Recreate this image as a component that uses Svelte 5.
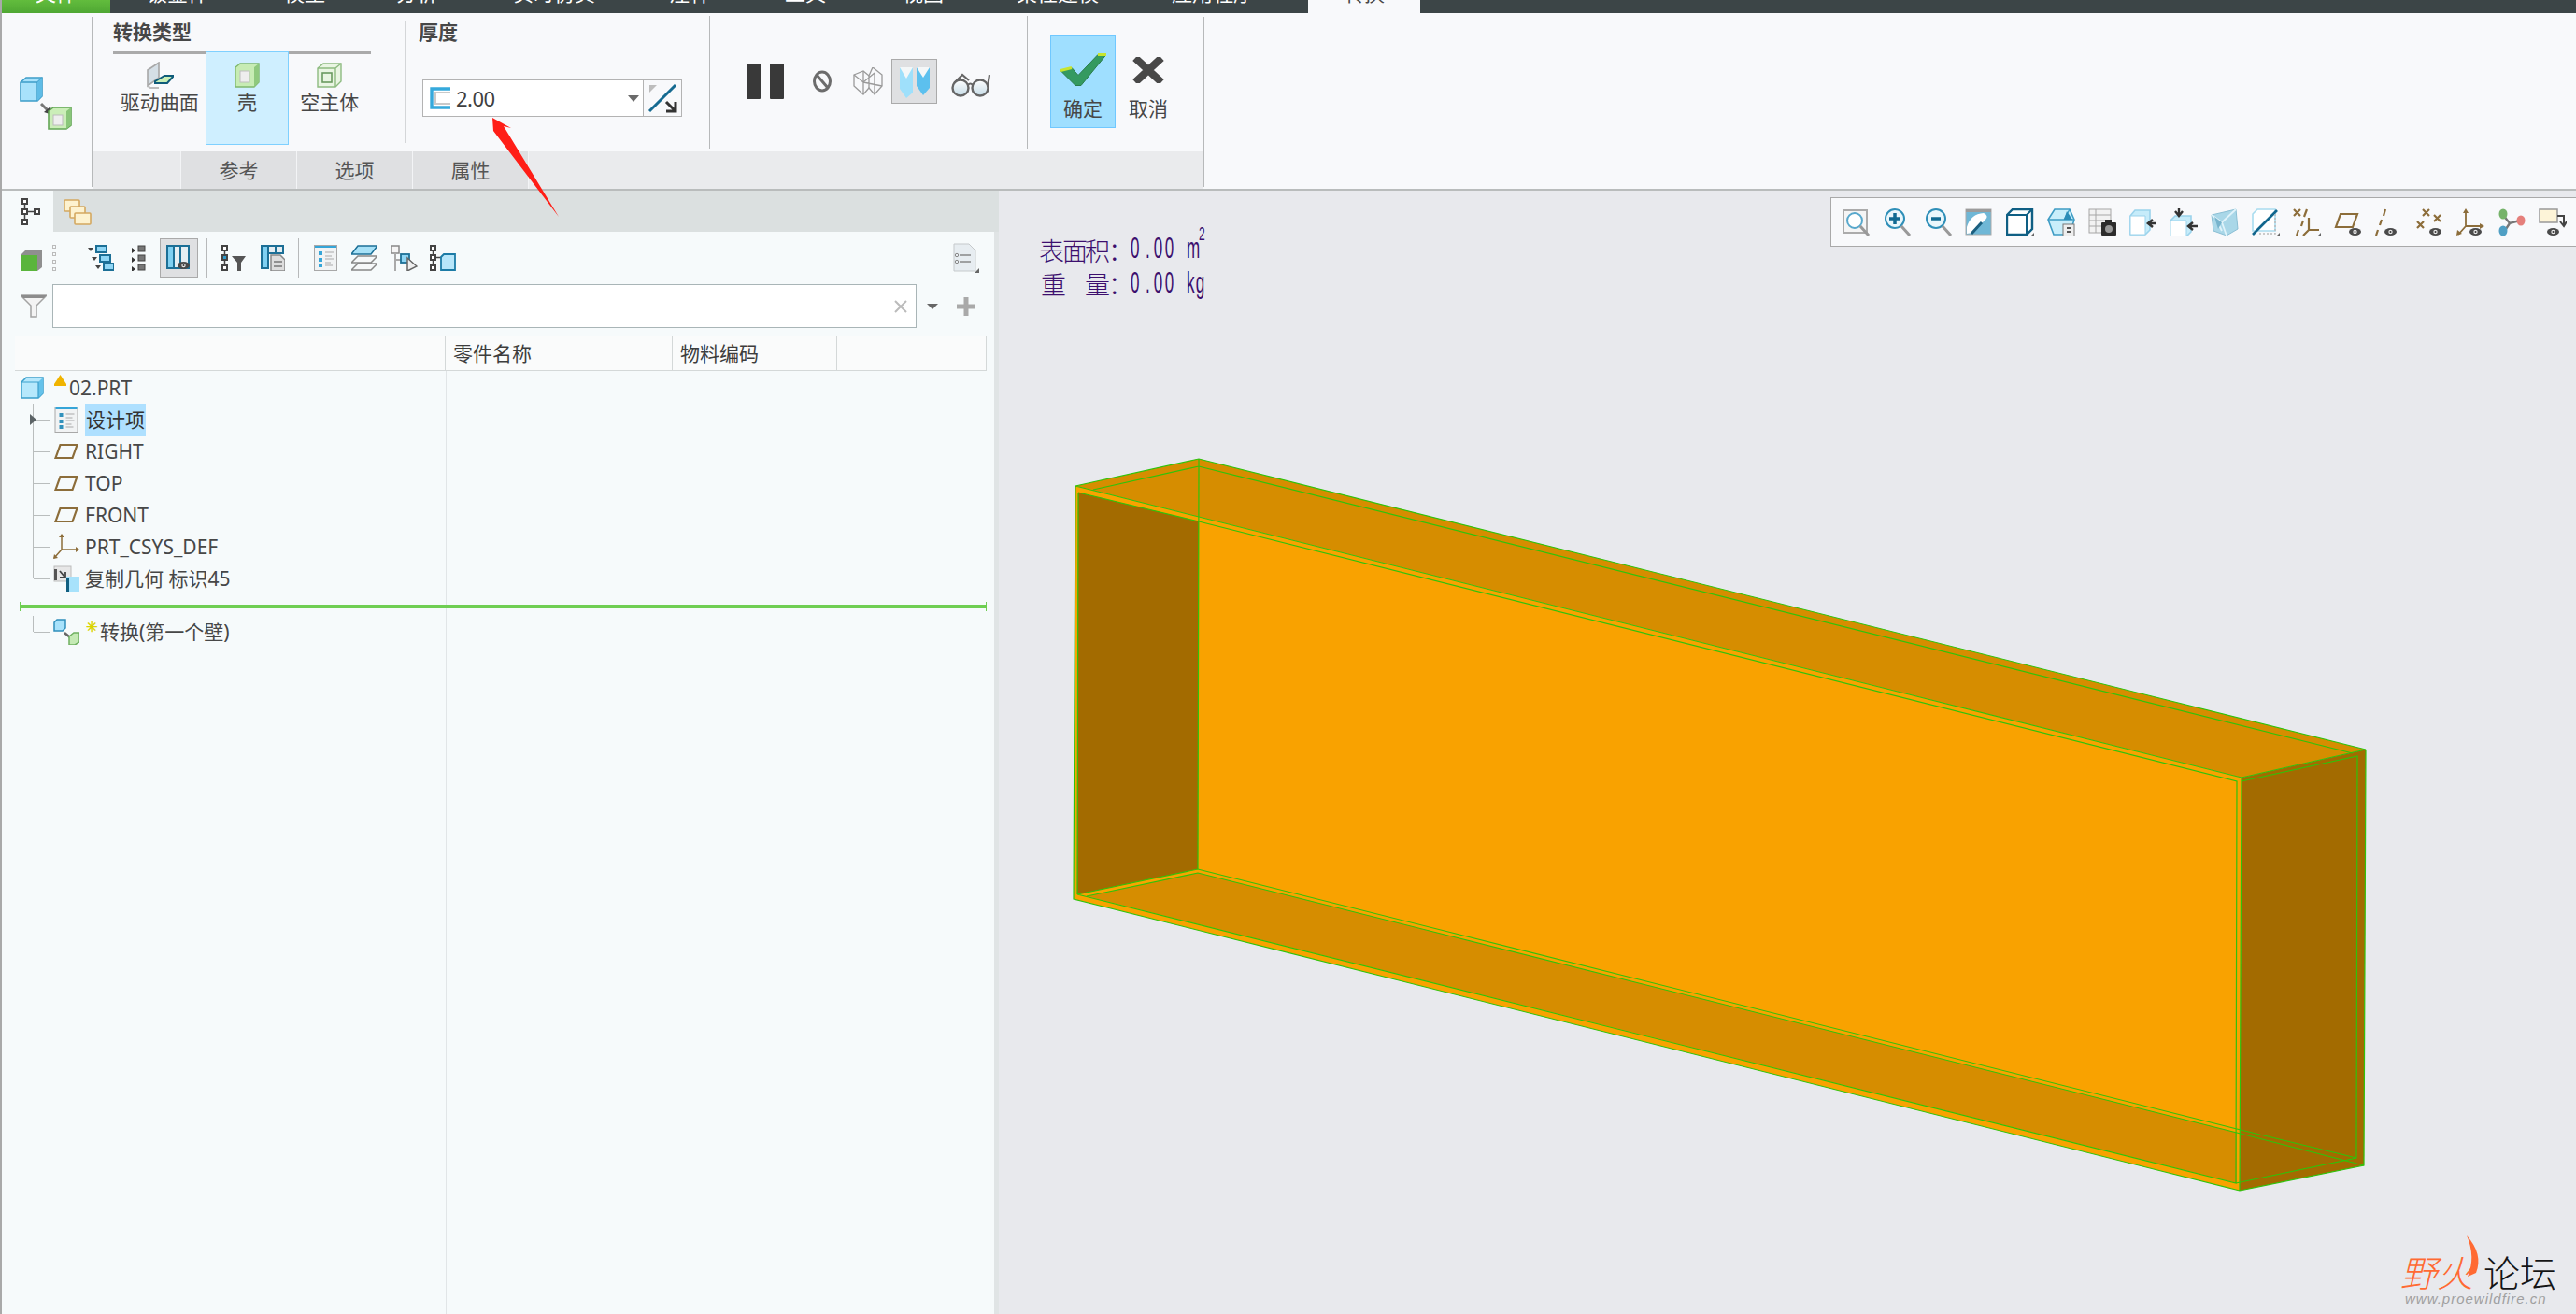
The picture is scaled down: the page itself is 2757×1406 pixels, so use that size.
<script>
  const tabs = [
    { label: '文件', width: 116, kind: 'file' },
    { label: '钣金件', width: 144 },
    { label: '模型', width: 128 },
    { label: '分析', width: 112 },
    { label: '实时仿真', width: 182 },
    { label: '注释', width: 108 },
    { label: '工具', width: 140 },
    { label: '视图', width: 112 },
    { label: '柔性建模', width: 176 },
    { label: '应用程序', width: 156 },
    { label: '', width: 24 },
    { label: '转换', width: 120, kind: 'active' },
  ];

  const dashTabs = ['参考', '选项', '属性'];
  const columns = [
    { label: '', width: 461 },
    { label: '零件名称', width: 243 },
    { label: '物料编码', width: 176 },
    { label: '', width: 160 },
  ];
</script>

<svg class="defs" width="0" height="0" aria-hidden="true">
  <defs>
    <g id="eye">
      <ellipse cx="6.5" cy="4" rx="6.5" ry="4" fill="#4a4a4a" />
      <circle cx="6.5" cy="4" r="2.2" fill="#e8e8e8" />
      <circle cx="6.5" cy="4" r="1" fill="#333" />
    </g>
    <g id="plane">
      <path d="M6 1H24L19 15H1Z" fill="none" stroke="#8c6d3a" stroke-width="2.2" />
    </g>
    <linearGradient id="lens" x1="0" y1="0" x2="0" y2="1">
      <stop offset="0" stop-color="#fff" />
      <stop offset="1" stop-color="#c5dbe6" />
    </linearGradient>
  </defs>
</svg>

<div class="app">
  <div class="topbar">
    {#each tabs as tab}
      <div class="tab {tab.kind ?? ''}" style="width: {tab.width}px"><span>{tab.label}</span></div>
    {/each}
  </div>

  <div class="ribbon">
    <div class="feature">
      <svg width="60" height="58" viewBox="0 0 60 58">
        <path d="M3 7L9 2H26V22L21 27H3Z" fill="#a8e2fb" stroke="#3d9dc9" stroke-width="1.6" />
        <path d="M3 7H21V27M21 7L26 2" fill="none" stroke="#3d9dc9" stroke-width="1.4" />
        <path d="M21 7L26 2V22L21 27Z" fill="#5fbce6" />
        <path d="M25 30L33 38" stroke="#777" stroke-width="3" />
        <path d="M37 42L28 39L35 33Z" fill="#444" />
        <path d="M33 38L38 34H57V53L52 57H33Z" fill="#cbeeb8" stroke="#63a655" stroke-width="1.6" />
        <path d="M52 38L57 34V53L52 57Z" fill="#89c679" />
        <rect x="38" y="42" width="10" height="11" fill="#eee" stroke="#bbb" />
      </svg>
    </div>
    <div class="sep full"></div>

    <div class="dash">
      <div class="dash-body">
        <section class="type-section">
          <div class="group-title">转换类型</div>
          <div class="type-group">
            <button class="type-btn first">
              <svg width="30" height="29" viewBox="0 0 30 29">
                <path d="M2 9L14 1V17L2 26Z" fill="#d5dfe6" stroke="#a7a7a7" stroke-width="1.6" />
                <path d="M2 26L5 28H14" fill="none" stroke="#bbb" stroke-width="2" />
                <path d="M10 21L20 15H30L23 23H10Z" fill="#c9efb6" stroke="#0f5c7a" stroke-width="2" />
              </svg>
              <span>驱动曲面</span>
            </button>
            <button class="type-btn selected">
              <svg width="27" height="27" viewBox="0 0 27 27">
                <path d="M1 5L6 1H26V21L21 26H1Z" fill="#c7ecb4" stroke="#7fb86d" stroke-width="1.4" />
                <path d="M21 5L26 1V21L21 26Z" fill="#8fc97e" />
                <rect x="6" y="9" width="10" height="12" fill="#eee" stroke="#bdbdbd" />
              </svg>
              <span>壳</span>
            </button>
            <button class="type-btn">
              <svg width="27" height="27" viewBox="0 0 27 27">
                <path d="M1 6L7 1H26V20L20 26H1Z" fill="#e9f5e2" stroke="#8dbb80" stroke-width="1.4" />
                <path d="M1 6H20V26M20 6L26 1" fill="none" stroke="#8dbb80" stroke-width="1.4" />
                <rect x="6" y="11" width="10" height="10" fill="none" stroke="#6a9a60" stroke-width="1.6" />
              </svg>
              <span>空主体</span>
            </button>
          </div>
        </section>
        <div class="sep mid"></div>

        <section class="thick-section">
          <div class="group-title">厚度</div>
          <div class="thick-row">
            <div class="thick-input">
              <svg width="23" height="24" viewBox="0 0 23 24">
                <path d="M22 2H2V22H22" fill="none" stroke="#35a9dc" stroke-width="3.4" />
                <path d="M22 6H6V18H22" fill="none" stroke="#c9c9c9" stroke-width="2" />
              </svg>
              <span class="thick-value">2.00</span>
              <i class="caret"></i>
            </div>
            <div class="flip">
              <svg width="34" height="34" viewBox="0 0 34 34">
                <path d="M3 3L11 3L3 11Z" fill="#bdbdbd" />
                <path d="M3 31L31 3" stroke="#156a90" stroke-width="3" />
                <path d="M21 21L30 30M31 21V31H21" fill="none" stroke="#333" stroke-width="3" />
              </svg>
            </div>
          </div>
        </section>
        <div class="sep tall"></div>

        <section class="tool-section">
          <div class="pause"><i></i><i></i></div>
          <svg class="no" width="20" height="26" viewBox="0 0 20 26">
            <ellipse cx="10" cy="13" rx="8.5" ry="10" fill="none" stroke="#6c6c6c" stroke-width="3" />
            <path d="M4 6L16 20" stroke="#6c6c6c" stroke-width="3" />
          </svg>
          <svg class="wire" width="34" height="30" viewBox="0 0 34 30">
            <g fill="none" stroke="#9a9a9a" stroke-width="1.3">
              <path d="M2 8L12 4L18 9L22 0L32 8V20L24 29L18 22L12 29L2 20Z" />
              <path d="M12 4V29M18 9V22M24 6V29M2 8L12 16L24 6M12 16L32 20" />
            </g>
          </svg>
          <div class="tool-toggle">
            <svg width="34" height="36" viewBox="0 0 34 36">
              <path d="M1 3H15V30L8 36L1 26Z" fill="#9fe0fb" />
              <path d="M1 3L8 15L15 3Z" fill="#f4f7f8" />
              <path d="M19 3H33V25L26 33L19 23Z" fill="#5cc0ee" />
              <path d="M19 3L26 14L33 3Z" fill="#f4f7f8" />
            </svg>
          </div>
          <svg class="glasses" width="46" height="26" viewBox="0 0 46 26">
            <g fill="url(#lens)" stroke="#666" stroke-width="2.4">
              <circle cx="10" cy="16" r="8.5" />
              <circle cx="31" cy="16" r="8.5" />
            </g>
            <path d="M18 13Q20.500 10 23 13M3 11L12 2L19 8M39 15L41 2" fill="none" stroke="#666" stroke-width="2.2" />
          </svg>
        </section>
        <div class="sep tall"></div>

        <section class="confirm-section">
          <button class="confirm ok">
            <svg width="50" height="35" viewBox="0 0 50 35">
              <path d="M1 18L13 15L20 23L41 1H50L23 34H17Z" fill="#349a60" stroke="#2b7d4c" stroke-width="1" />
              <path d="M1 18L13 15M41 1H50" stroke="#c7e52f" stroke-width="3" />
            </svg>
            <span>确定</span>
          </button>
          <button class="confirm">
            <svg width="36" height="28" viewBox="0 0 36 28">
              <path d="M4 1L32 27M32 1L4 27" stroke="#484848" stroke-width="8" />
            </svg>
            <span>取消</span>
          </button>
        </section>
      </div>

      <div class="dash-tabs">
        <div class="dash-lead"></div>
        {#each dashTabs as name}
          <div class="dash-tab">{name}</div>
        {/each}
      </div>
    </div>
    <div class="sep full"></div>
  </div>

  <div class="main">
    <aside class="panel">
      <div class="panel-tabs">
        <div class="panel-tab">
          <svg width="22" height="29" viewBox="0 0 22 29">
            <g fill="#fff" stroke="#444" stroke-width="2">
              <rect x="2" y="1" width="5" height="5" />
              <rect x="2" y="12" width="5" height="5" />
              <rect x="2" y="23" width="5" height="5" />
              <rect x="15" y="12" width="5" height="5" />
            </g>
            <path d="M4.500 6V12M4.500 17V23M7 14.500H15" stroke="#444" stroke-width="1.500" />
          </svg>
        </div>
        <svg class="folders" width="30" height="30" viewBox="0 0 30 30">
          <g fill="#fdf2cf" stroke="#d4a860" stroke-width="1.6">
            <rect x="1" y="3" width="16" height="12" rx="1" />
            <rect x="7" y="10" width="16" height="12" rx="1" />
            <rect x="12" y="17" width="17" height="12" rx="1" />
          </g>
        </svg>
      </div>

      <div class="panel-body">
        <div class="tree-tools">
          <svg class="ti model" width="22" height="22" viewBox="0 0 22 22">
            <path d="M0 4L4 0H22V18L17 22H0Z" fill="#8f8f8f" />
            <rect x="0" y="5" width="17" height="17" fill="#5ab53c" />
          </svg>
          <div class="dots"><i></i><i></i><i></i><i></i></div>
          <svg class="ti" style="margin-left: 34px" width="28" height="28" viewBox="0 0 28 28">
            <g fill="#8fd6f5" stroke="#1c6f96" stroke-width="2">
              <rect x="9" y="1" width="11" height="7" />
              <rect x="13" y="11" width="11" height="7" />
              <rect x="17" y="20" width="11" height="7" />
            </g>
            <path d="M0 3H6L3 7ZM4 13H10L7 17ZM8 22H14L11 26Z" fill="#444" />
          </svg>
          <svg class="ti" style="margin-left: 19px" width="15" height="28" viewBox="0 0 15 28">
            <path d="M0 3L4 6L0 9ZM0 13L4 16L0 19ZM0 23L4 26L0 29Z" fill="#333" />
            <g fill="#777" stroke="#444"><rect x="7" y="1" width="7" height="6" /><rect x="7" y="11" width="7" height="6" /><rect x="7" y="21" width="7" height="6" /></g>
          </svg>
          <div class="tool-pressed">
            <svg width="28" height="28" viewBox="0 0 28 28">
              <g fill="#e6eef2" stroke="#1c6f96" stroke-width="2"><rect x="1" y="1" width="7" height="24" fill="#7fd0f2" /><rect x="8" y="1" width="7" height="24" /><rect x="15" y="1" width="9" height="24" /></g>
              <use href="#eye" x="12" y="18" />
            </svg>
          </div>
          <i class="tool-sep"></i>
          <svg class="ti" style="margin-left: 14px" width="28" height="28" viewBox="0 0 28 28">
            <g fill="#fff" stroke="#444" stroke-width="2"><rect x="2" y="1" width="5" height="5" /><rect x="2" y="11" width="5" height="5" fill="#2f9bcb" /><rect x="2" y="22" width="5" height="5" /></g>
            <path d="M4.500 6V11M4.500 16V22" stroke="#444" stroke-width="1.500" />
            <path d="M12 12H27L22 19V28H18V19Z" fill="#555" />
          </svg>
          <svg class="ti" style="margin-left: 15px" width="26" height="28" viewBox="0 0 26 28">
            <g fill="#e6eef2" stroke="#1c6f96" stroke-width="2"><rect x="1" y="1" width="7" height="24" fill="#7fd0f2" /><rect x="8" y="1" width="8" height="8" /><rect x="16" y="1" width="8" height="8" /></g>
            <path d="M11 11H21L26 16V28H11Z" fill="#ddd" stroke="#888" stroke-width="1.500" />
            <path d="M14 18H23M14 23H23" stroke="#777" stroke-width="1.500" />
          </svg>
          <i class="tool-sep second"></i>
          <svg class="ti" style="margin-left: 16px" width="25" height="28" viewBox="0 0 25 28">
            <rect x="0.500" y="0.500" width="24" height="27" fill="#f1f3f4" stroke="#a8a8a8" />
            <rect x="1" y="1" width="23" height="2" fill="#35a5d8" />
            <path d="M5 7H9V11H5ZM5 14H9V18H5ZM5 20H9V24H5Z" fill="#35a5d8" />
            <path d="M12 8H21M12 12H19M12 15H21M12 19H18M12 22H20" stroke="#aaa" stroke-width="1.200" />
          </svg>
          <svg class="ti" style="margin-left: 15px" width="28" height="28" viewBox="0 0 28 28">
            <path d="M7 1H28L21 10H0Z" fill="#a7e1f7" stroke="#1c6f96" stroke-width="1.500" />
            <path d="M7 12H28L21 19H0ZM7 20H28L21 27H0Z" fill="#f6f8f9" stroke="#888" stroke-width="1.500" />
          </svg>
          <svg class="ti" style="margin-left: 14px" width="29" height="28" viewBox="0 0 29 28">
            <rect x="1" y="1" width="8" height="8" fill="#f5f5f5" stroke="#888" stroke-width="1.500" />
            <path d="M5 9V28M5 16H11" stroke="#aaa" stroke-width="2" />
            <rect x="11" y="10" width="9" height="9" fill="#8fd6f5" stroke="#1c6f96" stroke-width="1.800" />
            <path d="M18 14L28 23L18 28Z" fill="#eee" stroke="#666" stroke-width="1.500" />
          </svg>
          <svg class="ti" style="margin-left: 13px" width="28" height="28" viewBox="0 0 28 28">
            <g fill="#fff" stroke="#444" stroke-width="2"><rect x="1" y="1" width="5" height="5" /><rect x="1" y="11" width="5" height="5" /><rect x="1" y="22" width="5" height="5" /></g>
            <path d="M3.500 6V11M3.500 16V22M6 13.500H12" stroke="#444" stroke-width="1.500" />
            <path d="M12 13L15 10H27V27H12Z" fill="#b7e6fa" stroke="#1c7ba6" stroke-width="1.800" />
          </svg>
          <svg class="doc-list" width="28" height="32" viewBox="0 0 28 32">
            <path d="M1 1H17L24 8V30H1Z" fill="#e7edf1" stroke="#c5c9cb" />
            <path d="M7 13H19M7 20H19" stroke="#888" stroke-width="1.500" />
            <circle cx="4" cy="13" r="1.700" fill="none" stroke="#888" />
            <circle cx="4" cy="20" r="1.700" fill="none" stroke="#888" />
            <path d="M28 27V32H23Z" fill="#666" />
          </svg>
        </div>

        <div class="filter-row">
          <svg class="funnel" width="28" height="25" viewBox="0 0 28 25">
            <path d="M0 1H28L17 12V24H11V12Z" fill="#f3f3f3" stroke="#a3a3a3" stroke-width="1.500" />
            <path d="M0 1H28L25 4H3Z" fill="#8c8c8c" />
          </svg>
          <div class="filter-input">
            <svg width="14" height="14" viewBox="0 0 14 14"><path d="M1 1L13 13M13 1L1 13" stroke="#bbb" stroke-width="2" /></svg>
          </div>
          <i class="filter-caret"></i>
          <svg class="plus" width="20" height="20" viewBox="0 0 20 20"><path d="M10 0V20M0 10H20" stroke="#a9a9a9" stroke-width="5" /></svg>
        </div>

        <div class="col-head">
          {#each columns as col}
            <div class="col" style="width: {col.width}px">{col.label}</div>
          {/each}
        </div>

        <div class="tree">
          <div class="row root">
            <svg width="25" height="24" viewBox="0 0 25 24">
              <path d="M1 6L6 1H24V18L19 23H1Z" fill="#b6e8fc" stroke="#3a9fcc" stroke-width="1.500" />
              <path d="M19 6L24 1V18L19 23Z" fill="#65c2ea" />
              <path d="M1 6H19V23" fill="none" stroke="#3a9fcc" stroke-width="1.200" />
            </svg>
            <svg class="warn" width="13" height="13" viewBox="0 0 13 13"><path d="M6.500 0L13 10H0Z" fill="#f0b400" /><rect y="10" width="13" height="2" fill="#f0b400" /></svg>
            <span>02.PRT</span>
          </div>

          <div class="row">
            <i class="twig"><b class="expander"></b></i>
            <svg class="node-icon" width="25" height="28" viewBox="0 0 25 28">
              <rect x="0.500" y="0.500" width="24" height="27" fill="#f1f3f4" stroke="#a8a8a8" />
              <rect x="1" y="1" width="23" height="2" fill="#35a5d8" />
              <path d="M5 7H9V11H5ZM5 14H9V18H5ZM5 20H9V24H5Z" fill="#3191bc" />
              <path d="M12 8H21M12 12H19M12 15H21M12 19H18M12 22H20" stroke="#aaa" stroke-width="1.200" />
            </svg>
            <span class="highlight">设计项</span>
          </div>

          {#each ['RIGHT', 'TOP', 'FRONT'] as name}
            <div class="row">
              <i class="twig"></i>
              <svg class="node-icon" width="25" height="16" viewBox="0 0 25 16"><use href="#plane" /></svg>
              <span class="label">{name}</span>
            </div>
          {/each}

          <div class="row">
            <i class="twig"></i>
            <svg class="node-icon" width="28" height="28" viewBox="0 0 28 28">
              <path d="M9 1V17H27M9 17L1 26" fill="none" stroke="#8c6d3a" stroke-width="1.500" />
              <path d="M9 0L6 4H12ZM28 17L24 14V20ZM0 27L1 22L5 26Z" fill="#8c6d3a" />
            </svg>
            <span class="label">PRT_CSYS_DEF</span>
          </div>

          <div class="row last">
            <i class="twig"></i>
            <svg class="node-icon" width="28" height="28" viewBox="0 0 28 28">
              <rect x="1" y="1" width="18" height="16" fill="#e7e7e7" stroke="#bbb" />
              <rect x="1" y="4" width="3" height="12" fill="#555" />
              <path d="M7 6L12 12M13 7V13H7" fill="none" stroke="#444" stroke-width="1.800" />
              <rect x="14" y="12" width="14" height="16" fill="#a7e2fb" />
              <rect x="14" y="14" width="3" height="14" fill="#125f80" />
            </svg>
            <span class="label">复制几何 标识45</span>
          </div>

          <div class="insert-line"></div>

          <div class="row last new-feat">
            <i class="twig"></i>
            <svg class="node-icon" width="28" height="28" viewBox="0 0 28 28">
              <path d="M1 4L4 1H13V10L10 13H1Z" fill="#a8e2fb" stroke="#2f8fbc" stroke-width="1.500" />
              <path d="M12 15L18 20" stroke="#666" stroke-width="2.500" />
              <path d="M17 19L22 15H28V25L23 28H17Z" fill="#c5eab5" stroke="#6fb060" stroke-width="1.500" />
            </svg>
            <span class="star">✳</span>
            <span>转换(第一个壁)</span>
          </div>
        </div>
      </div>
    </aside>

    <main class="canvas">
      <svg class="scene" viewBox="1069 204 1688 1202" width="1688" height="1202">
        <polygon points="1151,520 2399,832 2397,1274 1149,962" fill="#f9a200" />
        <polygon points="1151,520 1283,491 2532,802 2399,832" fill="#d68d00" />
        <polygon points="1154,527 1283,558 1282,930 1153,957" fill="#a36b00" />
        <polygon points="1163,959 1282,934 2394,1212 2394,1266" fill="#d68d00" />
        <polygon points="2399,832 2532,802 2530,1247 2397,1274" fill="#a36b00" />
        <polygon points="1151,520 1170,524 1154,527" fill="#f9a200" />

        <g fill="none" stroke="#2fc30a" stroke-width="1.200">
          <path d="M1151 520L1283 491L2532 802L2399 832ZM1151 520L1149 962L2397 1274L2530 1247L2532 802M2399 832L2397 1274" />
          <path d="M1170 524L1283 499L2518 806M1283 491V499L1282 930" />
          <path d="M1154 527L1283 558L2394 836L2393 1266L1153 957L1282 930L2394 1208L2522 1239M1154 527L1153 957" />
          <path d="M1163 959L1282 934L2394 1212L2530 1247M2393 1266L2522 1239L2523 809L2399 836" />
        </g>

        <g class="note">
          <text x="1112 1137 1161 1186" y="279">表面积：</text>
          <text x="1114 1161 1186" y="315">重量：</text>
        </g>
        <g class="note-num">
          <text transform="translate(1210 276) scale(.55 1)" x="0 29 45 67 90 109">0.00 m</text>
          <text transform="translate(1283 257) scale(.6 1)" class="sup">2</text>
          <text transform="translate(1210 313) scale(.55 1)" x="0 29 45 67 90 109 127">0.00 kg</text>
        </g>

        <g class="mark">
          <text class="wild" x="2569" y="1377">野火</text>
          <path d="M2640 1322Q2658 1342 2650 1362L2641 1366Q2650 1345 2640 1322Z" fill="#ff6a33" />
          <text class="forum" x="2658" y="1377">论坛</text>
          <text class="site" x="2574" y="1395">www.proewildfire.cn</text>
        </g>
      </svg>

      <div class="view-bar">
        <svg class="vi" viewBox="0 0 30 30">
          <rect x="1" y="2" width="25" height="24" fill="#f5f5f5" stroke="#ababab" stroke-width="2" />
          <circle cx="13" cy="13" r="8" fill="#fff" stroke="#58a8cc" stroke-width="2" />
          <path d="M19 19L28 29" stroke="#999" stroke-width="3" />
        </svg>
        <svg class="vi" viewBox="0 0 30 30">
          <circle cx="12" cy="11" r="10" fill="#eaf7fc" stroke="#2f8fb8" stroke-width="2" />
          <path d="M12 5V17M6 11H18" stroke="#116a92" stroke-width="3.500" />
          <path d="M19 19L28 29" stroke="#999" stroke-width="3" />
        </svg>
        <svg class="vi" viewBox="0 0 30 30">
          <circle cx="12" cy="11" r="10" fill="#eaf7fc" stroke="#2f8fb8" stroke-width="2" />
          <path d="M7 11H17" stroke="#116a92" stroke-width="3.500" />
          <path d="M19 19L28 29" stroke="#999" stroke-width="3" />
        </svg>
        <svg class="vi" viewBox="0 0 30 30">
          <rect x="1" y="1" width="27" height="27" fill="#6fb7d6" stroke="#aaa" />
          <rect x="1" y="1" width="27" height="3" fill="#9c9c9c" />
          <path d="M2 20Q6 6 20 5Q26 8 22 12L12 22L8 26L2 27Z" fill="#fff" />
          <path d="M7 27L18 15" stroke="#1b5f7f" stroke-width="3" />
        </svg>
        <svg class="vi" viewBox="0 0 30 30">
          <path d="M1 7L7 1H28V22L22 28H1Z" fill="#fff" stroke="#0f5f84" stroke-width="2.400" />
          <path d="M1 7H22V28M22 7L28 1" fill="none" stroke="#0f5f84" stroke-width="2" />
          <path d="M30 26V30H26Z" fill="#666" />
        </svg>
        <svg class="vi" viewBox="0 0 30 30">
          <path d="M1 12L8 1H24L29 12L24 28H7Z" fill="#c9eefb" stroke="#3e9cc4" stroke-width="1.600" />
          <path d="M1 12H18L24 1M18 12L29 12" fill="none" stroke="#3e9cc4" stroke-width="1.400" />
          <path d="M18 12L21 3L27 12Z" fill="#2c8db8" />
          <rect x="17" y="17" width="12" height="13" fill="#eee" stroke="#777" />
          <path d="M21 21H25M21 25H25" stroke="#555" stroke-width="1.800" />
        </svg>
        <svg class="vi" viewBox="0 0 30 30">
          <rect x="1" y="1" width="23" height="25" fill="#f2f2f2" stroke="#a6a6a6" />
          <path d="M1 7H24M1 13H24M1 19H16M8 1V26" stroke="#a6a6a6" />
          <rect x="14" y="15" width="16" height="14" rx="1" fill="#2c2c2c" />
          <rect x="18" y="12" width="7" height="4" fill="#2c2c2c" />
          <circle cx="22" cy="22" r="4" fill="#999" />
        </svg>
        <svg class="vi" viewBox="0 0 30 30">
          <path d="M1 8L6 2H22V23L17 28H1Z" fill="#c6ecfa" stroke="#9bd3ec" stroke-width="1.600" />
          <path d="M1 8H17V28H1Z" fill="#fff" stroke="#9bd3ec" />
          <path d="M29 16H21M25 12L20 16L25 20" fill="none" stroke="#333" stroke-width="2.600" />
        </svg>
        <svg class="vi" viewBox="0 0 30 30">
          <path d="M1 13L6 8H23V25L18 30H1Z" fill="#c6ecfa" stroke="#9bd3ec" stroke-width="1.600" />
          <path d="M1 13H18V30H1Z" fill="#fff" stroke="#9bd3ec" />
          <path d="M10 0V7M6 3L10 8L14 3" fill="none" stroke="#333" stroke-width="2.400" />
          <path d="M30 19H22M25 15L20 19L25 23" fill="none" stroke="#333" stroke-width="2.400" />
        </svg>
        <svg class="vi" viewBox="0 0 30 30">
          <path d="M1 7L27 1L29 22L17 29L3 24Z" fill="#a9d7e8" stroke="#8bbfd4" />
          <path d="M1 7L12 15L27 1M12 15L17 29M6 12L12 24" fill="none" stroke="#e0f3fa" stroke-width="1.800" />
          <path d="M4 9L12 15L8 22Z" fill="#77b4cd" />
        </svg>
        <svg class="vi" viewBox="0 0 30 30">
          <path d="M1 6L6 1H25V24H1Z" fill="#fff" stroke="#a9dcef" stroke-width="1.600" />
          <path d="M1 28L27 2" stroke="#12668d" stroke-width="2.600" />
          <path d="M25 6V27H8" fill="none" stroke="#bbb" stroke-width="1.500" stroke-dasharray="2 2" />
          <path d="M30 26V30H26Z" fill="#666" />
        </svg>
        <svg class="vi" viewBox="0 0 30 30">
          <g stroke="#8c6d3a" stroke-width="2.200" fill="none">
            <path d="M1 1L8 8M8 1L1 8M15 1L12 9M11 13L9 19M6 23L4 29" />
            <path d="M17 10V23H28M17 23L11 29" />
          </g>
          <path d="M30 26V30H26Z" fill="#666" />
        </svg>
        <svg class="vi" viewBox="0 0 30 30">
          <g transform="translate(1 5)"><use href="#plane" /></g>
          <use href="#eye" x="16" y="21" />
        </svg>
        <svg class="vi" viewBox="0 0 30 30">
          <path d="M12 1L10 8M8 12L6 18M4 23L2 29" stroke="#8c6d3a" stroke-width="2.200" />
          <use href="#eye" x="11" y="21" />
        </svg>
        <svg class="vi" viewBox="0 0 30 30">
          <path d="M8 1L15 8M15 1L8 8M20 7L27 14M27 7L20 14M2 14L9 21M9 14L2 21" stroke="#8c6d3a" stroke-width="2.200" />
          <use href="#eye" x="15" y="21" />
        </svg>
        <svg class="vi" viewBox="0 0 30 30">
          <path d="M10 2V19H28M10 19L2 28" fill="none" stroke="#8c6d3a" stroke-width="1.800" />
          <path d="M10 0L7 5H13ZM30 19L25 16V22ZM0 29L1 23L6 27Z" fill="#8c6d3a" />
          <use href="#eye" x="14" y="21" />
        </svg>
        <svg class="vi" viewBox="0 0 30 30">
          <path d="M6 7L13 16L24 13M13 16L7 25" fill="none" stroke="#777" stroke-width="2.400" />
          <ellipse cx="6" cy="6" rx="4.500" ry="5.500" fill="#76b36a" />
          <ellipse cx="25" cy="13" rx="4.500" ry="5.500" fill="#e57f7b" />
          <ellipse cx="6" cy="24" rx="4.500" ry="5.500" fill="#4f9fc4" />
        </svg>
        <svg class="vi" viewBox="0 0 30 30">
          <rect x="1" y="1" width="19" height="14" fill="#fdf4d8" stroke="#999" stroke-width="1.500" />
          <path d="M20 8H27V18M23 14L27 19L30 14" fill="none" stroke="#444" stroke-width="2" />
          <use href="#eye" x="9" y="21" />
        </svg>
      </div>
    </main>
  </div>

  <svg class="callout" width="80" height="112" viewBox="0 0 80 112">
    <polygon points="7,6 27,17 19,15 78,112 8,20" fill="#ff1e17" />
  </svg>
</div>

<style>
  :global(body) {
    margin: 0;
  }

  .defs {
    position: absolute;
  }

  .app {
    position: relative;
    display: flex;
    flex-direction: column;
    width: 2757px;
    height: 1406px;
    box-sizing: border-box;
    border-left: 2px solid #a9a9a9;
    overflow: hidden;
    background: #f8f9fb;
    color: #474747;
    font-family: 'Noto Sans', 'Noto Sans CJK SC', sans-serif;
    font-size: 21px;
  }

  button {
    padding: 0;
    border: 1px solid transparent;
    background: none;
    color: inherit;
    font: inherit;
  }

  .topbar {
    display: flex;
    flex: none;
    height: 14px;
    overflow: hidden;
    background: #3c4547;
    color: #fff;
  }

  .tab {
    display: flex;
    flex: none;
    justify-content: center;
    height: 14px;
  }

  .tab span {
    margin-top: -23px;
    line-height: 30px;
    font-size: 22px;
  }

  .tab.file {
    background: linear-gradient(#62bc3d, #4fa733);
  }

  .tab.active {
    background: #f8f9fb;
    color: #474747;
  }

  .ribbon {
    display: flex;
    flex: none;
    box-sizing: border-box;
    height: 190px;
    border-bottom: 2px solid #b9bcbc;
  }

  .feature {
    display: flex;
    flex: none;
    width: 96px;
    box-sizing: border-box;
    padding: 67px 0 0 17px;
  }

  .sep {
    flex: none;
    width: 1px;
    background: #b7b9ba;
  }

  .sep.full {
    height: 182px;
    margin-top: 4px;
  }

  .sep.mid {
    height: 131px;
    margin-top: 8px;
    background: #d4d6d8;
  }

  .sep.tall {
    height: 142px;
    margin-top: 3px;
  }

  .dash {
    display: flex;
    flex: none;
    flex-direction: column;
    width: 1189px;
  }

  .dash-body {
    display: flex;
    flex: none;
    height: 148px;
  }

  .group-title {
    height: 20px;
    line-height: 20px;
    font-weight: 700;
  }

  .type-section {
    flex: none;
    width: 334px;
    box-sizing: border-box;
    padding: 10px 0 0 22px;
  }

  .type-group {
    display: flex;
    width: 276px;
    margin-top: 11px;
    border-top: 3px solid #aaa;
  }

  .type-btn {
    display: flex;
    flex: 1 0 88px;
    flex-direction: column;
    align-items: center;
    box-sizing: border-box;
    height: 100px;
    margin-top: -3px;
    padding-top: 10px;
    line-height: 26px;
  }

  .type-btn.first {
    flex-basis: 99px;
  }

  .type-btn svg {
    flex: none;
    height: 29px;
    margin-bottom: 1px;
  }

  .type-btn.selected {
    border-color: #7fd0ff;
    background: #cfefff;
  }

  .thick-section {
    flex: none;
    width: 325px;
    box-sizing: border-box;
    padding: 10px 0 0 14px;
  }

  .thick-row {
    display: flex;
    margin: 41px 0 0 4px;
  }

  .thick-input {
    display: flex;
    align-items: center;
    width: 237px;
    height: 40px;
    box-sizing: border-box;
    padding-left: 7px;
    border: 1px solid #b3b3b3;
    background: #fff;
  }

  .thick-value {
    margin-left: 5px;
    color: #3f3f3f;
    font-size: 22px;
    letter-spacing: -0.5px;
    line-height: 36px;
  }

  .caret {
    width: 0;
    height: 0;
    margin-left: auto;
    margin-right: 4px;
    border-top: 7px solid #6a6a6a;
    border-left: 6px solid transparent;
    border-right: 6px solid transparent;
  }

  .flip {
    display: flex;
    align-items: center;
    justify-content: center;
    width: 41px;
    height: 40px;
    box-sizing: border-box;
    border: 1px solid #b3b3b3;
    border-left: 0;
  }

  .tool-section {
    display: flex;
    flex: none;
    align-items: center;
    width: 339px;
    height: 146px;
    box-sizing: border-box;
    padding-left: 39px;
  }

  .pause {
    display: flex;
    gap: 10px;
  }

  .pause i {
    width: 15px;
    height: 38px;
    border-radius: 1px;
    background: #393939;
  }

  .no {
    margin-left: 31px;
  }

  .wire {
    margin-left: 22px;
  }

  .tool-toggle {
    display: flex;
    align-items: center;
    justify-content: center;
    width: 49px;
    height: 48px;
    box-sizing: border-box;
    margin-left: 8px;
    border: 1px solid #aaa;
    background: #dfe0e2;
  }

  .glasses {
    margin: 8px 0 0 15px;
  }

  .confirm-section {
    display: flex;
    flex: none;
    width: 188px;
    box-sizing: border-box;
    padding: 23px 0 0 24px;
  }

  .confirm {
    display: flex;
    flex: none;
    flex-direction: column;
    align-items: center;
    width: 70px;
    height: 100px;
    box-sizing: border-box;
    line-height: 26px;
  }

  .confirm svg {
    flex: none;
    height: 36px;
    margin-top: 19px;
    margin-bottom: 10px;
  }

  .confirm.ok {
    border-color: #70c8ff;
    background: #9fdfff;
  }

  .confirm:not(.ok) svg {
    margin-top: 23px;
    margin-bottom: 6px;
    height: 28px;
  }

  .confirm:not(.ok) span {
    margin-top: 8px;
  }

  .dash-tabs {
    display: flex;
    height: 41px;
    background: #eaebed;
    line-height: 40px;
  }

  .dash-lead {
    width: 94px;
    background: #e9eaec;
  }

  .dash-tab {
    width: 123px;
    border-left: 1px solid #f3f4f6;
    background: #dfe0e2;
    color: #555;
    text-align: center;
  }

  .dash-tab:last-child {
    border-right: 1px solid #f3f4f6;
  }

  .main {
    display: flex;
    flex: 1;
    min-height: 0;
  }

  .panel {
    display: flex;
    flex: none;
    flex-direction: column;
    width: 1067px;
    background: #e0e4e5;
  }

  .panel-tabs {
    display: flex;
    flex: none;
    align-items: center;
    height: 44px;
    background: #dbe0e0;
  }

  .panel-tab {
    display: flex;
    align-items: center;
    width: 55px;
    height: 100%;
    box-sizing: border-box;
    padding-left: 20px;
    background: #f6fafb;
  }

  .folders {
    margin-left: 11px;
  }

  .panel-body {
    display: flex;
    flex: 1;
    flex-direction: column;
    width: 1062px;
    background: #f6fafb;
  }

  .tree-tools {
    display: flex;
    flex: none;
    align-items: center;
    height: 56px;
  }

  .model {
    margin: 6px 0 0 21px;
  }

  .dots {
    display: flex;
    flex-direction: column;
    gap: 4px;
    margin-left: 11px;
  }

  .dots i {
    width: 4px;
    height: 4px;
    border: 1px solid #bbb;
    box-sizing: border-box;
  }

  .tool-pressed {
    display: flex;
    align-items: center;
    justify-content: center;
    width: 41px;
    height: 42px;
    box-sizing: border-box;
    margin-left: 15px;
    border: 1px solid #aaa;
    background: #dfe0e2;
  }

  .tool-sep {
    width: 1px;
    height: 42px;
    margin-left: 9px;
    background: #b7b9ba;
  }

  .tool-sep.second {
    margin-left: 14px;
  }

  .doc-list {
    margin-left: auto;
    margin-right: 16px;
  }

  .filter-row {
    display: flex;
    flex: none;
    align-items: center;
    height: 47px;
  }

  .funnel {
    margin-left: 20px;
  }

  .filter-input {
    display: flex;
    align-items: center;
    justify-content: flex-end;
    width: 925px;
    height: 47px;
    box-sizing: border-box;
    margin-left: 6px;
    padding-right: 9px;
    border: 1px solid #a9b5b7;
    background: #fff;
  }

  .filter-caret {
    width: 0;
    height: 0;
    margin-left: 11px;
    border-top: 6px solid #666;
    border-left: 6px solid transparent;
    border-right: 6px solid transparent;
  }

  .plus {
    margin-left: 20px;
  }

  .col-head {
    display: flex;
    flex: none;
    width: 1040px;
    height: 37px;
    box-sizing: border-box;
    margin: 9px 0 0 14px;
    border-bottom: 1px solid #d4d8d8;
    background: #fafbfb;
  }

  .col {
    flex: none;
    box-sizing: border-box;
    padding-left: 8px;
    border-right: 1px solid #d4d8d8;
    color: #3d3d3d;
    line-height: 36px;
    font-size: 21px;
  }

  .tree {
    flex: 1;
    padding-top: 1px;
    background: linear-gradient(#e1e5e7, #e1e5e7) 475px 0 / 1px 100% no-repeat;
  }

  .row {
    display: flex;
    align-items: center;
    height: 34px;
    line-height: 34px;
  }

  .row.root {
    padding-left: 20px;
  }

  .warn {
    align-self: flex-start;
    margin: 3px 3px 0 11px;
  }

  .twig {
    position: relative;
    align-self: stretch;
    flex: none;
    width: 21px;
    margin-left: 33px;
    border-left: 1px solid #b9bdbd;
  }

  .twig::after {
    content: '';
    position: absolute;
    left: 0;
    top: 17px;
    width: 17px;
    border-top: 1px solid #b9bdbd;
  }

  .row.last .twig {
    height: 17px;
  }

  .expander {
    position: absolute;
    z-index: 1;
    left: -4px;
    top: 11px;
    border-top: 6px solid transparent;
    border-bottom: 6px solid transparent;
    border-left: 7px solid #5b6366;
  }

  .node-icon {
    flex: none;
    width: 28px;
  }

  .label,
  .highlight {
    margin-left: 6px;
  }

  .highlight {
    padding: 0 1px;
    background: #aee0ff;
    color: #333;
  }

  .insert-line {
    position: relative;
    width: 1035px;
    height: 4px;
    margin: 11px 0 0 19px;
    background: #6fce52;
  }

  .insert-line::before,
  .insert-line::after {
    content: '';
    position: absolute;
    top: -3px;
    width: 1px;
    height: 10px;
    background: #6fce52;
  }

  .insert-line::before {
    left: 0;
  }

  .insert-line::after {
    right: 0;
  }

  .new-feat {
    margin-top: 8px;
  }

  .star {
    align-self: flex-start;
    width: 15px;
    margin-left: 7px;
    color: #d9d400;
    line-height: 22px;
    font-size: 15px;
    font-weight: 700;
  }

  .canvas {
    position: relative;
    flex: 1;
    min-width: 0;
    overflow: hidden;
    background: #e8e9ed;
  }

  .scene {
    position: absolute;
    left: 0;
    top: 0;
  }

  .note text {
    fill: #3c0f6e;
    font-family: 'Noto Sans CJK SC', sans-serif;
    font-size: 27px;
    font-weight: 300;
  }

  .note-num text {
    fill: #3c0f6e;
    font-family: 'Liberation Sans', sans-serif;
    font-size: 31px;
  }

  .note-num .sup {
    font-size: 20px;
  }

  .mark .wild,
  .mark .forum {
    font-family: 'Noto Sans CJK SC', sans-serif;
    font-size: 39px;
    font-weight: 300;
  }

  .mark .wild {
    fill: #ff6a33;
    font-style: italic;
  }

  .mark .forum {
    fill: #151515;
  }

  .mark .site {
    fill: #a0a0a0;
    font-family: 'Liberation Sans', sans-serif;
    font-size: 15px;
    font-style: italic;
    letter-spacing: 1px;
  }

  .view-bar {
    position: absolute;
    left: 890px;
    top: 7px;
    display: flex;
    align-items: center;
    gap: 13.8px;
    width: 830px;
    height: 53px;
    box-sizing: border-box;
    padding-left: 12px;
    border: 1px solid #a9a9a9;
    background: #f8f9fb;
  }

  .vi {
    flex: none;
    width: 30px;
    height: 30px;
  }

  .callout {
    position: absolute;
    left: 518px;
    top: 120px;
  }
</style>
